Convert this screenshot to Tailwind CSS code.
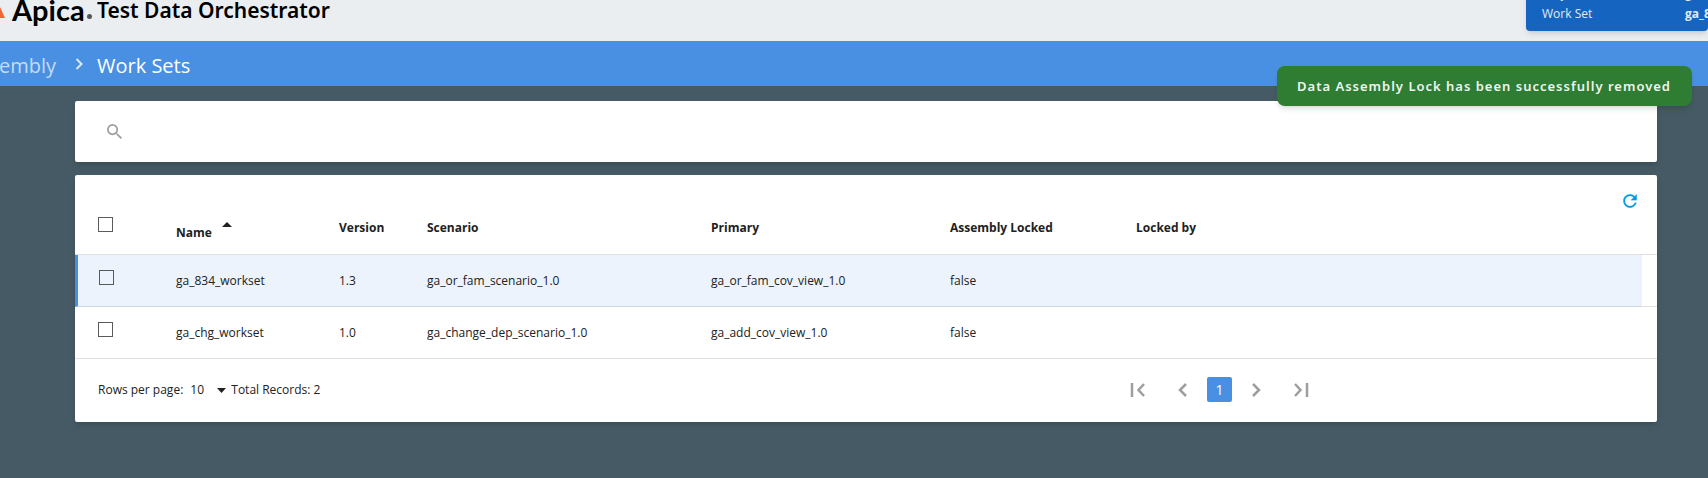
<!DOCTYPE html>
<html lang="en">
<head>
<meta charset="utf-8">
<title>Work Sets</title>
<script src="https://cdn.jsdelivr.net/npm/@tailwindcss/browser@4"></script>
</head>
<body class="min-h-screen overflow-x-hidden bg-[#455a64] font-['Open_Sans',sans-serif] text-xs text-[#212121]">
<header class="flex h-[41px] items-start justify-between overflow-hidden bg-[#eaeef1]">
  <div class="flex h-[41px] items-start text-black">
    <svg class="h-[18px] w-[5px] shrink-0" viewBox="0 0 5 18" aria-hidden="true"><path d="M0 7 5 18H0Z" fill="#f26336"/></svg>
    <span class="ml-[7px] -mt-2 w-[73px] whitespace-nowrap font-['Lato',sans-serif] text-[29px] font-bold leading-9">Apica</span>
    <span class="ml-[2px] mt-[14px] size-[5px] rounded-full bg-[#555]"></span>
    <span class="ml-[5px] -mt-1 whitespace-nowrap font-['Noto_Sans',sans-serif] text-[21px] font-semibold leading-7">Test Data Orchestrator</span>
  </div>
  <dl class="-mt-4 grid w-[182px] shrink-0 grid-cols-[143px_1fr] rounded-sm bg-[#1565c0] pb-[7px] pl-4 leading-5 text-[#e3eaf3] shadow-md">
    <dt>Project</dt><dd class="whitespace-nowrap font-bold">ga_834</dd>
    <dt>Work Set</dt><dd class="whitespace-nowrap font-bold">ga_834</dd>
  </dl>
</header>
<nav aria-label="Breadcrumb" class="flex h-[45px] items-center overflow-hidden bg-[#4a90e2] pt-[5px] text-xl text-white">
  <div class="flex w-14 shrink-0 justify-end"><a href="#" class="whitespace-nowrap text-[#c5dbf5]">Data Assembly</a></div>
  <svg class="mb-1 ml-[19px] h-3 w-2 text-[#dbe9f9]" viewBox="0 0 8 12" fill="none" stroke="currentColor" stroke-width="2" aria-hidden="true"><path d="M1.500 1 6.500 6 1.500 11"/></svg>
  <span class="ml-[14px] whitespace-nowrap">Work Sets</span>
</nav>
<main class="flex flex-col gap-[13px] pt-[15px] pr-[51px] pb-14 pl-[75px]">
  <form class="flex h-[61px] items-center gap-3 rounded-xs bg-white px-8 shadow-md">
    <svg class="size-[15px] text-[#9e9e9e]" viewBox="3 3 17.500 17.500" fill="currentColor" aria-hidden="true"><path d="M15.500 14h-.79l-.28-.27A6.471 6.471 0 0 0 16 9.500 6.500 6.500 0 1 0 9.500 16c1.610 0 3.090-.59 4.230-1.570l.27.28v.79l5 4.990L20.490 19l-4.990-5zm-6 0C7.010 14 5 11.990 5 9.500S7.010 5 9.500 5 14 7.010 14 9.500 11.990 14 9.500 14z"/></svg>
    <input type="text" aria-label="Search work sets" class="h-8 flex-1 bg-transparent text-sm outline-none">
  </form>
  <section class="rounded-xs bg-white shadow-md">
    <div class="flex justify-end pt-4 pr-[17px]">
      <button type="button" aria-label="Refresh" class="size-5 text-[#039be5]"><svg class="size-5" viewBox="0 0 24 24" fill="currentColor" stroke="currentColor" stroke-width=".25" aria-hidden="true"><path d="M17.650 6.350C16.200 4.900 14.210 4 12 4c-4.420 0-7.990 3.580-7.990 8s3.570 8 7.990 8c3.730 0 6.840-2.550 7.730-6h-2.080c-.82 2.330-3.040 4-5.650 4-3.310 0-6-2.690-6-6s2.690-6 6-6c1.660 0 3.140.69 4.220 1.780L13 11h7V4l-2.350 2.350z"/></svg></button>
    </div>
    <table class="w-full table-fixed border-separate border-spacing-0 text-left">
      <colgroup><col class="w-[97px]"><col class="w-[163px]"><col class="w-[88px]"><col class="w-[284px]"><col class="w-[239px]"><col class="w-[186px]"><col class="w-[115px]"><col><col class="w-[15px]"></colgroup>
      <thead>
        <tr class="h-11 align-top leading-4 *:border-b *:border-[#e0e0e0]">
          <th class="pt-[6px] pl-[23px]"><input type="checkbox" aria-label="Select all rows" class="block size-[15px] appearance-none border border-[#5a5a5a] bg-white"></th>
          <th class="pt-[11px] pl-1" aria-sort="ascending"><button type="button" class="flex items-start gap-[10px] font-bold"><span class="pt-[3px]">Name</span><svg class="h-[5px] w-[10px]" viewBox="0 0 10 5" fill="currentColor" aria-hidden="true"><path d="M0 5 5 0 10 5Z"/></svg></button></th>
          <th class="pt-[9px] pl-1">Version</th>
          <th class="pt-[9px] pl-1">Scenario</th>
          <th class="pt-[9px] pl-1">Primary</th>
          <th class="pt-[9px] pl-1">Assembly Locked</th>
          <th class="pt-[9px] pl-1">Locked by</th>
          <th></th><th></th>
        </tr>
      </thead>
      <tbody>
        <tr class="h-[52px] *:border-b *:border-[#cfd5de] *:bg-[#ecf3fc]">
          <td class="border-l-[3px] border-l-[#4a90e2]! pb-[6px] pl-[21px]"><input type="checkbox" aria-label="Select ga_834_workset" class="block size-[15px] appearance-none border border-[#5a5a5a]"></td>
          <td class="pl-1">ga_834_workset</td><td class="pl-1">1.3</td><td class="pl-1">ga_or_fam_scenario_1.0</td><td class="pl-1">ga_or_fam_cov_view_1.0</td><td class="pl-1">false</td><td></td><td></td><td class="border-[#e0e0e0]! bg-white!"></td>
        </tr>
        <tr class="h-[52px] *:border-b *:border-[#e0e0e0]">
          <td class="pb-[6px] pl-[23px]"><input type="checkbox" aria-label="Select ga_chg_workset" class="block size-[15px] appearance-none border border-[#5a5a5a]"></td>
          <td class="pl-1">ga_chg_workset</td><td class="pl-1">1.0</td><td class="pl-1">ga_change_dep_scenario_1.0</td><td class="pl-1">ga_add_cov_view_1.0</td><td class="pl-1">false</td><td></td><td></td><td></td>
        </tr>
      </tbody>
    </table>
    <div class="flex h-[63px] items-center pr-[348px] pb-[2px] pl-[23px]">
      <label for="rows" class="whitespace-nowrap">Rows per page:</label>
      <div class="relative ml-[7px] w-9">
        <select id="rows" class="block w-full appearance-none bg-transparent"><option>10</option><option>25</option><option>50</option></select>
        <svg class="pointer-events-none absolute top-[6px] right-0 h-[5px] w-[9px]" viewBox="0 0 9 5" fill="currentColor" aria-hidden="true"><path d="M0 0H9L4.500 5Z"/></svg>
      </div>
      <span class="ml-[5px] whitespace-nowrap">Total Records: 2</span>
      <div class="ml-auto flex items-center text-[#9e9e9e]">
        <button type="button" aria-label="First page"><svg class="h-[14px] w-[15px]" viewBox="0 0 15 14" fill="none" stroke="currentColor" stroke-width="2.500" aria-hidden="true"><path d="M2 0V14M14 1 8.500 7 14 13"/></svg></button>
        <button type="button" aria-label="Previous page" class="ml-8"><svg class="h-[14px] w-[10px]" viewBox="0 0 10 14" fill="none" stroke="currentColor" stroke-width="2.500" aria-hidden="true"><path d="M9 1 3 7 9 13"/></svg></button>
        <button type="button" aria-current="page" class="ml-5 size-[25px] rounded-xs bg-[#4a90e2] text-sm text-white">1</button>
        <button type="button" aria-label="Next page" class="ml-5"><svg class="h-[14px] w-[10px]" viewBox="0 0 10 14" fill="none" stroke="currentColor" stroke-width="2.500" aria-hidden="true"><path d="M1 1 7 7 1 13"/></svg></button>
        <button type="button" aria-label="Last page" class="ml-8"><svg class="h-[14px] w-[15px]" viewBox="0 0 15 14" fill="none" stroke="currentColor" stroke-width="2.500" aria-hidden="true"><path d="M1 1 6.500 7 1 13M13 0V14"/></svg></button>
      </div>
    </div>
  </section>
</main>
<div role="status" class="absolute top-[66px] right-4 flex h-10 items-center rounded-lg bg-[#2e7d32] pr-[21px] pl-5 font-['Noto_Sans',sans-serif] text-[13px] font-semibold tracking-[1px] whitespace-nowrap text-[#edf5ee] shadow-md"><span class="pt-[2px]">Data Assembly Lock has been successfully removed</span></div>
</body>
</html>
